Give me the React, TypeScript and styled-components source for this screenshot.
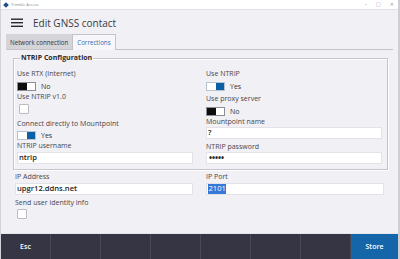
import React from "react";
import styled, { createGlobalStyle } from "styled-components";

const Global = createGlobalStyle`
  html, body { margin: 0; padding: 0; background: #ffffff; }
  body { font-family: "Open Sans", "DejaVu Sans", sans-serif; }
  * { box-sizing: border-box; }
`;

const Window = styled.div`
  width: 400px;
  height: 259px;
  display: flex;
  flex-direction: column;
  background: #f1f0f5;
  border-left: 1px solid #d3d2d8;
  border-right: 2px solid #cfced4;
  overflow: hidden;
`;

const TitleBar = styled.div`
  height: 10px;
  flex: none;
  background: #ffffff;
  border-bottom: 1px solid #e2e1e6;
  display: flex;
  align-items: center;
  padding-left: 2px;
  gap: 3px;
`;

const AppIcon = styled.div`
  width: 4px;
  height: 4px;
  background: #1b4f86;
  transform: rotate(45deg);
  margin-left: 1px;
`;

const AppName = styled.span`
  font-size: 4px;
  color: #8a8a8a;
  line-height: 1;
`;

const WinControls = styled.div`
  margin-left: auto;
  display: flex;
  align-items: center;
  gap: 9px;
  padding-right: 4px;
  color: #9a9a9f;
  font-size: 5px;
  line-height: 1;
`;

const Header = styled.div`
  height: 24px;
  flex: none;
  display: flex;
  align-items: center;
  padding: 2px 0 0 10px;
  gap: 10px;
`;

const Title = styled.h1`
  margin: 0;
  font-size: 10px;
  font-weight: 400;
  color: #3a3a3e;
  line-height: 1;
  padding-bottom: 1px;
`;

const TabRow = styled.div`
  height: 16px;
  flex: none;
  display: flex;
  padding-left: 5px;
  padding-right: 5px;
`;

const Tab = styled.div<{ $active?: boolean }>`
  height: 16px;
  padding: 0 ${(p) => (p.$active ? "4px" : "3px")};
  display: flex;
  align-items: center;
  font-size: 6.2px;
  color: ${(p) => (p.$active ? "#2d6cb5" : "#333338")};
  background: ${(p) => (p.$active ? "#f7f7fa" : "#d5d4d9")};
  border: 1px solid ${(p) => (p.$active ? "#c4c3ca" : "#d5d4d9")};
  border-bottom: ${(p) => (p.$active ? "none" : "1px solid #c4c3ca")};
`;

const TabFill = styled.div`
  flex: 1;
  border-bottom: 1px solid #c4c3ca;
`;

const Panel = styled.div`
  flex: 1;
  padding: 3px 10px 0 12px;
  border-bottom: 1px solid #e6e5ea;
`;

const Fieldset = styled.fieldset`
  margin: 0;
  padding: 6px 5px 5px 3px;
  border: 1px solid #c6c5cc;
  box-shadow: inset 1px 1px 0 #ffffff, 1px 1px 0 #ffffff;
`;

const Legend = styled.legend`
  font-size: 7px;
  font-weight: 700;
  color: #2a2a2e;
  padding: 0 1px;
  margin-left: 3px;
  line-height: 10px;
`;

const Columns = styled.div`
  display: grid;
  grid-template-columns: 1fr 1fr;
  column-gap: 13px;
`;

const Column = styled.div`
  display: flex;
  flex-direction: column;
  align-items: flex-start;
`;

const Label = styled.div<{ $mt?: number }>`
  font-size: 7px;
  line-height: 10px;
  height: 10px;
  color: #47464c;
  margin-top: ${(p) => p.$mt || 0}px;
  white-space: nowrap;
`;

const ToggleRow = styled.div<{ $mt?: number }>`
  display: flex;
  align-items: center;
  gap: 5px;
  height: 9px;
  margin-top: ${(p) => p.$mt || 0}px;
`;

const Track = styled.div<{ $on?: boolean }>`
  width: 19px;
  height: 9px;
  border: 1px solid ${(p) => (p.$on ? "#b8c3d0" : "#8e8d93")};
  background: #ffffff;
  display: flex;
  justify-content: ${(p) => (p.$on ? "flex-end" : "flex-start")};
`;

const Knob = styled.div<{ $on?: boolean }>`
  width: ${(p) => (p.$on ? "8px" : "9px")};
  height: 100%;
  background: ${(p) => (p.$on ? "#0b5fa5" : "#0d0d0f")};
`;

const StateText = styled.span`
  font-size: 7px;
  color: #333338;
  line-height: 1;
`;

const Checkbox = styled.div<{ $mt?: number }>`
  width: 10px;
  height: 10px;
  background: #ffffff;
  border: 1px solid #bcbbc3;
  border-radius: 1px;
  margin-top: ${(p) => p.$mt || 0}px;
  margin-left: 2px;
`;

const Input = styled.div<{ $mt?: number }>`
  align-self: stretch;
  height: 12px;
  background: #ffffff;
  border: 1px solid #e3e2e8;
  margin-top: ${(p) => p.$mt || 0}px;
  display: flex;
  align-items: center;
  padding-left: 1px;
  font-size: 7.6px;
  font-weight: 600;
  color: #1e1e22;
  line-height: 1;
  white-space: nowrap;
`;

const Dots = styled.span`
  font-size: 8px;
  font-weight: 700;
  color: #222;
  padding-left: 1px;
`;

const Selected = styled.span`
  background: #3478d8;
  color: #ffffff;
  padding: 1px 0.5px;
  font-weight: 400;
`;

const Below = styled.div`
  padding: 2px 4px 0 2px;
`;

const Footer = styled.div`
  height: 25px;
  flex: none;
  display: grid;
  grid-template-columns: repeat(7, 50px) 1fr;
  background: #363543;
`;

const FooterButton = styled.div<{ $primary?: boolean }>`
  display: flex;
  align-items: center;
  justify-content: center;
  color: #ffffff;
  font-size: 7px;
  font-weight: 600;
  background: ${(p) => (p.$primary ? "#1565a9" : "transparent")};
  border-right: ${(p) => (p.$primary ? "none" : "1px solid #4a4957")};
`;

function Toggle({ on, mt }: { on?: boolean; mt?: number }) {
  return (
    <ToggleRow $mt={mt}>
      <Track $on={on}>
        <Knob $on={on} />
      </Track>
      <StateText>{on ? "Yes" : "No"}</StateText>
    </ToggleRow>
  );
}

function Hamburger() {
  return (
    <svg width="12" height="10" viewBox="0 0 12 10">
      <rect x="0" y="0.5" width="12" height="1.4" fill="#2a2a2e" />
      <rect x="0" y="4" width="12" height="1.4" fill="#2a2a2e" />
      <rect x="0" y="7.6" width="12" height="1.4" fill="#2a2a2e" />
    </svg>
  );
}

export default function App() {
  return (
    <>
      <Global />
      <Window>
        <TitleBar>
          <AppIcon />
          <AppName>Trimble Access</AppName>
          <WinControls>
            <span>–</span>
            <span>□</span>
            <span>✕</span>
          </WinControls>
        </TitleBar>
        <Header>
          <Hamburger />
          <Title>Edit GNSS contact</Title>
        </Header>
        <TabRow>
          <Tab>Network connection</Tab>
          <Tab $active>Corrections</Tab>
          <TabFill />
        </TabRow>
        <Panel>
          <Fieldset>
            <Legend>NTRIP Configuration</Legend>
            <Columns>
              <Column>
                <Label>Use RTX (Internet)</Label>
                <Toggle mt={3} />
                <Label $mt={1}>Use NTRIP v1.0</Label>
                <Checkbox $mt={2} />
                <Label $mt={5}>Connect directly to Mountpoint</Label>
                <Toggle on mt={2} />
                <Label $mt={1}>NTRIP username</Label>
                <Input $mt={1}>ntrip</Input>
              </Column>
              <Column>
                <Label>Use NTRIP</Label>
                <Toggle on mt={3} />
                <Label $mt={3}>Use proxy server</Label>
                <Toggle mt={3} />
                <Label $mt={1}>Mountpoint name</Label>
                <Input>?</Input>
                <Label $mt={3}>NTRIP password</Label>
                <Input>
                  <Dots>•••••</Dots>
                </Input>
              </Column>
            </Columns>
          </Fieldset>
          <Below>
            <Columns>
              <Column>
                <Label>IP Address</Label>
                <Input $mt={1}>upgr12.ddns.net</Input>
                <Label $mt={3}>Send user identity info</Label>
                <Checkbox $mt={1} />
              </Column>
              <Column>
                <Label>IP Port</Label>
                <Input $mt={1}>
                  <Selected>2101</Selected>
                </Input>
              </Column>
            </Columns>
          </Below>
        </Panel>
        <Footer>
          <FooterButton>Esc</FooterButton>
          <FooterButton />
          <FooterButton />
          <FooterButton />
          <FooterButton />
          <FooterButton />
          <FooterButton />
          <FooterButton $primary>Store</FooterButton>
        </Footer>
      </Window>
    </>
  );
}
